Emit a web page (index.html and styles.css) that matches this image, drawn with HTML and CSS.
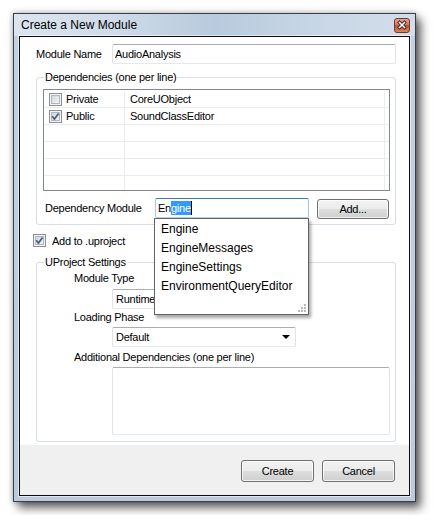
FILE: index.html
```html
<!DOCTYPE html>
<html>
<head>
<meta charset="utf-8">
<title>Create a New Module</title>
<link rel="stylesheet" href="styles.css">
</head>
<body>
<div class="window">
  <div class="titlebar">
    <span class="title">Create a New Module</span>
    <span class="close">
      <svg width="16" height="15" viewBox="0 0 16 15">
        <defs>
          <linearGradient id="cg" x1="0" y1="0" x2="0" y2="1">
            <stop offset="0" stop-color="#eaa999"/>
            <stop offset="0.45" stop-color="#d87660"/>
            <stop offset="0.5" stop-color="#c4502f"/>
            <stop offset="1" stop-color="#d98a62"/>
          </linearGradient>
        </defs>
        <rect x="0.5" y="0.5" width="15" height="14" rx="2.5" fill="url(#cg)" stroke="#6d3a32"/>
        <path d="M5.5 4.5 L10.5 9.5 M10.5 4.5 L5.5 9.5" stroke="#4a2a26" stroke-width="3.4" stroke-linecap="square"/>
        <path d="M5.5 4.5 L10.5 9.5 M10.5 4.5 L5.5 9.5" stroke="#ffffff" stroke-width="1.5" stroke-linecap="square"/>
      </svg>
    </span>
  </div>
  <div class="client">
    <div class="content">
      <div class="name-row">
        <span class="name-label">Module Name</span>
        <div class="textbox name-box">AudioAnalysis</div>
      </div>

      <div class="group group-deps">
        <div class="legend">Dependencies (one per line)</div>
        <div class="list">
          <div class="row">
            <div class="cell c1"><span class="cb"></span><span>Private</span></div>
            <div class="cell c2">CoreUObject</div>
          </div>
          <div class="row">
            <div class="cell c1"><span class="cb"><svg width="11" height="11" viewBox="0 0 11 11"><path d="M2.3 5.3 L4.4 8 L8.6 2.4" fill="none" stroke="#4a5d82" stroke-width="1.7"/></svg></span><span>Public</span></div>
            <div class="cell c2">SoundClassEditor</div>
          </div>
          <div class="row"><div class="cell c1"></div><div class="cell c2"></div></div>
          <div class="row"><div class="cell c1"></div><div class="cell c2"></div></div>
          <div class="row"><div class="cell c1"></div><div class="cell c2"></div></div>
          <div class="row"><div class="cell c1"></div><div class="cell c2"></div></div>
        </div>
        <div class="dep-row">
          <span class="dep-label">Dependency Module</span>
          <div class="dep-field">
            <div class="textbox focused">En<span class="sel">gine</span><span class="caret"></span></div>
            <div class="popup">
              <div class="item">Engine</div>
              <div class="item">EngineMessages</div>
              <div class="item">EngineSettings</div>
              <div class="item">EnvironmentQueryEditor</div>
              <svg class="grip" width="10" height="10" viewBox="0 0 10 10">
                <g fill="#b9b9b9">
                  <rect x="7" y="1" width="2" height="2"/>
                  <rect x="4" y="4" width="2" height="2"/><rect x="7" y="4" width="2" height="2"/>
                  <rect x="1" y="7" width="2" height="2"/><rect x="4" y="7" width="2" height="2"/><rect x="7" y="7" width="2" height="2"/>
                </g>
              </svg>
            </div>
          </div>
          <div class="button add-btn">Add...</div>
        </div>
      </div>

      <div class="check-row">
        <span class="cb"><svg width="11" height="11" viewBox="0 0 11 11"><path d="M2.3 5.3 L4.4 8 L8.6 2.4" fill="none" stroke="#4a5d82" stroke-width="1.7"/></svg></span>
        <span>Add to .uproject</span>
      </div>

      <div class="group group-proj">
        <div class="legend">UProject Settings</div>
        <div class="field-label first">Module Type</div>
        <div class="combo c-runtime"><span>Runtime</span><span class="arrow"></span></div>
        <div class="field-label">Loading Phase</div>
        <div class="combo c-default"><span>Default</span><span class="arrow"></span></div>
        <div class="field-label">Additional Dependencies (one per line)</div>
        <div class="textbox textarea"></div>
      </div>
    </div>
    <div class="buttonbar">
      <div class="button">Create</div>
      <div class="button">Cancel</div>
    </div>
  </div>
</div>
</body>
</html>
```

FILE: styles.css
```css
html, body {
  margin: 0;
  background: #ffffff;
}
body {
  padding: 13px;
  font-family: "Liberation Sans", Arial, sans-serif;
  font-size: 11px;
  letter-spacing: -0.25px;
  color: #000;
}

.window {
  width: 403px;
  height: 489px;
  box-sizing: border-box;
  border: 1px solid #3b4048;
  background: linear-gradient(180deg, #c3d2e3 0%, #bacbde 100%);
  display: flex;
  flex-direction: column;
  box-shadow: 5px 6px 9px rgba(0, 0, 0, 0.6), 0 0 6px rgba(0, 0, 0, 0.3);
}

.titlebar {
  height: 22px;
  flex: none;
  display: flex;
  align-items: center;
  justify-content: space-between;
  padding: 0 5px 0 7px;
  background: linear-gradient(90deg, #dbe5f0 0%, #cfdbe8 25%, #b8cadd 50%, #c6d5e5 72%, #d3deea 100%);
}
.title {
  font-size: 12px;
  letter-spacing: 0;
  line-height: 14px;
  color: #000;
}
.close {
  display: block;
  height: 15px;
  margin-top: 1px;
}
.close svg { display: block; }

.client {
  flex: 1;
  margin: 0 5px 5px 5px;
  border: 1px solid #0d0d0d;
  background: #fff;
  display: flex;
  flex-direction: column;
  box-shadow: 0 0 0 1px rgba(255, 255, 255, 0.55);
}
.content {
  flex: 1;
  padding-top: 7px;
}

/* module name */
.name-row {
  display: flex;
  align-items: center;
  height: 20px;
  margin: 0 13px 0 16px;
}
.name-label { width: 76px; }
.textbox {
  box-sizing: border-box;
  height: 20px;
  border: 1px solid #e2e3ea;
  border-top-color: #abadb3;
  border-bottom-color: #e3e9ef;
  border-radius: 2px;
  background: #fff;
  padding: 0 2px;
  line-height: 18px;
  white-space: nowrap;
}
.name-box { flex: 1; }

/* group boxes */
.group {
  border: 1px solid #d5dfe5;
  border-radius: 3px;
  margin: 13px 13px 0 16px;
}
.legend {
  width: fit-content;
  height: 13px;
  line-height: 13px;
  margin: -7px 0 0 7px;
  padding: 0 1px;
  background: #fff;
}
.group-deps { padding-bottom: 6px; }
.group-proj { margin-top: 15px; padding-bottom: 6px; }

/* list */
.list {
  box-sizing: border-box;
  height: 102px;
  margin: 5px 5px 0 6px;
  border: 1px solid #828790;
  padding-top: 1px;
  overflow: hidden;
}
.row {
  display: grid;
  grid-template-columns: 81px 260px;
  height: 17px;
  box-sizing: border-box;
  border-bottom: 1px solid #ececec;
}
.cell {
  display: flex;
  align-items: center;
  border-right: 1px solid #ececec;
  box-sizing: border-box;
  white-space: nowrap;
}
.c1 { padding-left: 5px; gap: 4px; }
.c2 { padding-left: 5px; }

/* checkbox */
.cb {
  width: 13px;
  height: 13px;
  box-sizing: border-box;
  flex: none;
  border: 1px solid #8e8f8f;
  background: linear-gradient(135deg, #cdd1d6 0%, #eceef0 70%, #f7f7f7 100%);
  box-shadow: inset 0 0 0 1px #f4f4f4, inset 0 0 0 2px #b3b7bd;
  display: flex;
}
.cb svg { display: block; }

/* dependency module row */
.dep-row {
  display: flex;
  align-items: flex-start;
  margin-top: 7px;
  padding-left: 8px;
  height: 20px;
}
.dep-label {
  width: 110px;
  line-height: 20px;
}
.dep-field {
  position: relative;
  width: 154px;
}
.focused {
  border-color: #b5cfe7;
  border-top-color: #3d7bad;
  border-left-color: #a4c9e3;
  border-right-color: #a4c9e3;
  display: flex;
  align-items: center;
  padding-left: 2px;
}
.sel {
  background: #3399ff;
  color: #fff;
  line-height: 14px;
}
.caret {
  width: 1px;
  height: 14px;
  background: #000;
}
.popup {
  position: absolute;
  left: -1px;
  top: 20px;
  width: 155px;
  height: 97px;
  box-sizing: border-box;
  border: 1px solid #646464;
  background: #fff;
  padding-top: 1px;
  box-shadow: 2px 3px 3px rgba(0, 0, 0, 0.35);
  z-index: 5;
}
.item {
  height: 19px;
  line-height: 19px;
  padding-left: 6px;
  font-size: 12px;
  letter-spacing: 0;
  white-space: nowrap;
}
.grip {
  position: absolute;
  right: 1px;
  bottom: 1px;
}

/* buttons */
.button {
  box-sizing: border-box;
  width: 73px;
  height: 22px;
  border: 1px solid #707070;
  border-radius: 3px;
  background: linear-gradient(180deg, #f2f2f2 0%, #ebebeb 48%, #dddddd 52%, #cfcfcf 100%);
  box-shadow: inset 0 0 0 1px rgba(255, 255, 255, 0.75);
  text-align: center;
  line-height: 20px;
}
.add-btn {
  width: 72px;
  height: 20px;
  line-height: 18px;
  margin: 1px 0 0 8px;
}

/* add to .uproject */
.check-row {
  display: flex;
  align-items: center;
  gap: 6px;
  height: 13px;
  margin: 9px 0 0 13px;
}

/* uproject settings */
.field-label {
  height: 13px;
  line-height: 13px;
  margin: 2px 0 0 37px;
  white-space: nowrap;
}
.field-label.first { margin-top: 3px; }
.combo {
  box-sizing: border-box;
  width: 184px;
  height: 20px;
  margin: 3px 0 0 75px;
  border: 1px solid #e2e3ea;
  border-top-color: #abadb3;
  border-bottom-color: #e3e9ef;
  border-radius: 2px;
  display: flex;
  align-items: center;
  justify-content: space-between;
  padding: 0 5px 0 3px;
}
.c-runtime { margin-top: 4px; }
.c-default + .field-label { margin-top: 4px; }
.arrow {
  width: 0;
  height: 0;
  border-left: 4px solid transparent;
  border-right: 4px solid transparent;
  border-top: 4px solid #000;
}
.textarea {
  width: 278px;
  height: 68px;
  margin: 3px 0 0 75px;
}

/* bottom bar */
.buttonbar {
  flex: none;
  height: 50px;
  box-sizing: border-box;
  background: #f0f0f0;
  display: flex;
  justify-content: flex-end;
  align-items: flex-start;
  gap: 8px;
  padding: 15px 14px 0 0;
}
```
